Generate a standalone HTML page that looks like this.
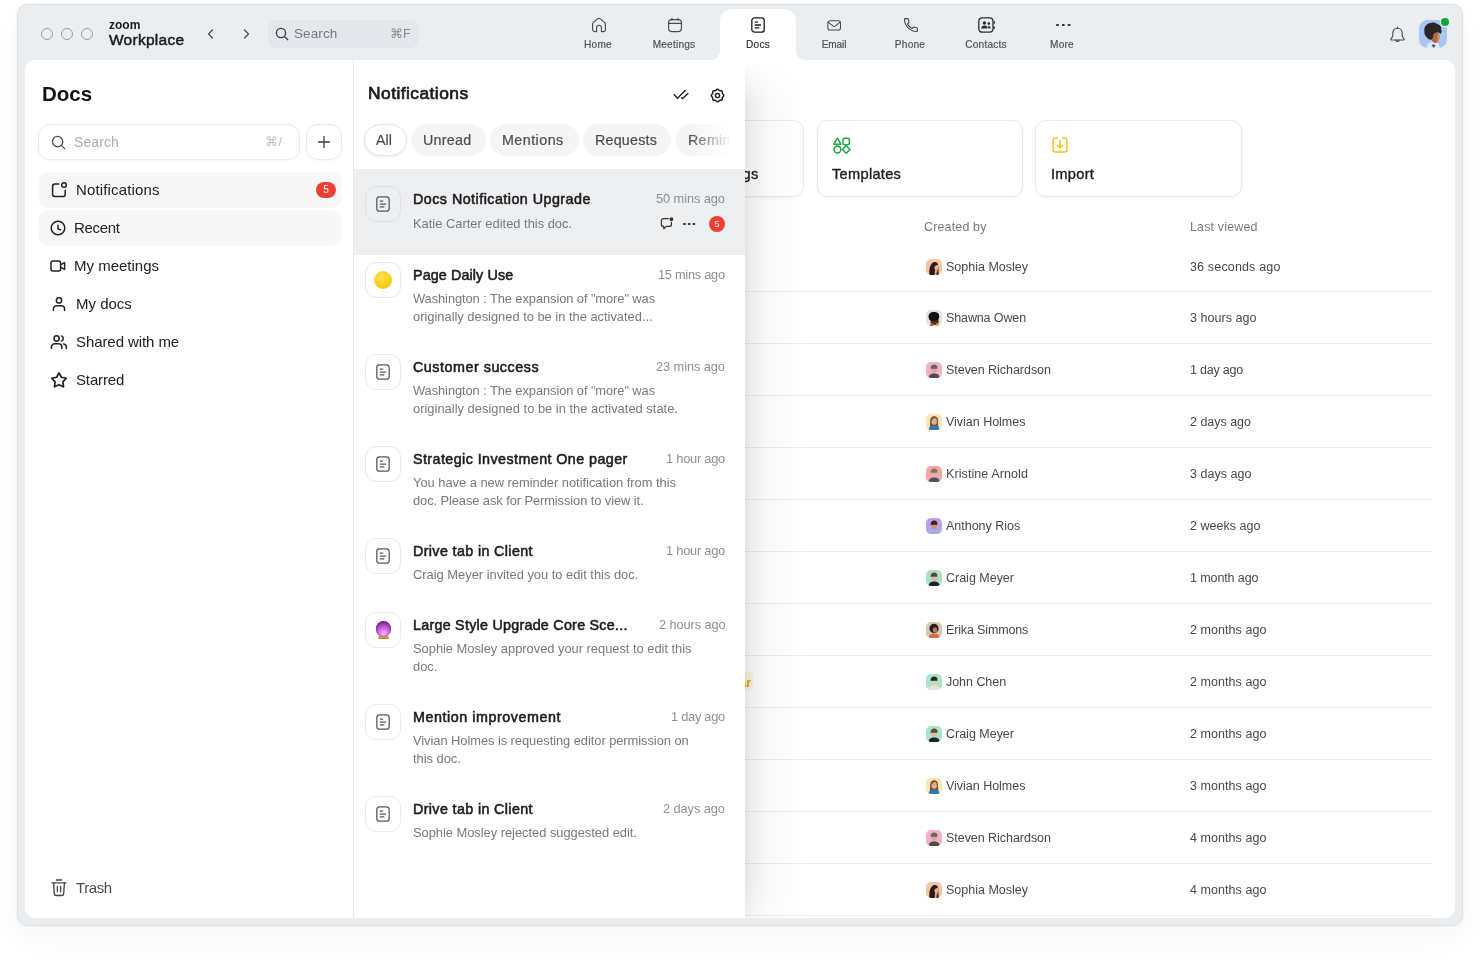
<!DOCTYPE html>
<html lang="en">
<head>
<meta charset="utf-8">
<title>Zoom Workplace - Docs</title>
<style>
*{box-sizing:border-box;margin:0;padding:0}
html,body{width:1480px;height:975px;overflow:hidden;background:#fff}
body{font-family:"Liberation Sans",sans-serif;color:#1f1f1f;position:relative;-webkit-font-smoothing:antialiased}
.abs{position:absolute}
.t{position:absolute;white-space:nowrap;line-height:1;will-change:transform}
svg{display:block;overflow:visible}
/* window */
#win{left:17px;top:4px;width:1446px;height:922px;border-radius:11px;background:#ebeef1;box-shadow:inset 0 0 0 1px rgba(0,0,0,.045),0 0 3px rgba(0,0,0,.06),0 14px 30px rgba(0,0,0,.035)}
#panel{left:25px;top:60px;width:1430px;height:858px;border-radius:10px;background:#fff;overflow:hidden}
.tl{width:12px;height:12px;border-radius:50%;border:1px solid #9a9da2;top:28px}
#tsearch{left:268px;top:20px;width:150px;height:28px;border-radius:8px;background:#e3e6ea}
.nav{font-size:10.1px;color:#4a4d52;-webkit-text-stroke:.15px #4a4d52;transform:translateX(-50%);top:40px;letter-spacing:.22px}
#doctab{left:720px;top:9px;width:76px;height:52px;background:#fff;border-radius:12px 12px 0 0}
#doctab:before,#doctab:after{content:"";position:absolute;bottom:1px;width:10px;height:10px;background:radial-gradient(circle at 0 0,transparent 10px,#fff 10.5px)}
#doctab:before{left:-10px}
#doctab:after{right:-10px;background:radial-gradient(circle at 100% 0,transparent 10px,#fff 10.5px)}
/* sidebar */
.sbi{left:13px;width:304px;height:36px;border-radius:10px}
.sbt{font-size:15px;color:#222;letter-spacing:.15px}

.ibox{left:340px;width:36px;height:36px;border-radius:11px;border:1px solid #e9eaec;background:#fff}
.chip{top:64px;height:32px;border-radius:16px;background:#f5f5f6}
.chipt{top:72.6px;font-size:14.3px;color:#4c4c4e;-webkit-text-stroke:.2px #4c4c4e}
.ntitle{font-size:14.3px;color:#1c1c1e;-webkit-text-stroke:.55px #1c1c1e}
.ntime{font-size:12.8px;color:#8e9094;letter-spacing:-.15px}
.nsub{font-size:12.9px;color:#77797d;letter-spacing:-.05px}

.card{top:60px;height:77px;border-radius:11px;border:1px solid #e9eaec;background:#fff;box-shadow:0 1px 3px rgba(0,0,0,.05)}
.cardt{top:106.7px;font-size:14.6px;color:#1c1c1e;-webkit-text-stroke:.35px #1c1c1e;letter-spacing:.3px}
.th{top:161px;font-size:12.4px;color:#77797d;letter-spacing:.2px}
.td{font-size:12.5px;color:#47484b;letter-spacing:.06px}
</style>
</head>
<body>
<div id="win" class="abs"></div>

<!-- title bar -->
<div class="abs tl" style="left:41px"></div>
<div class="abs tl" style="left:61px"></div>
<div class="abs tl" style="left:81px"></div>
<div class="t" style="left:108.5px;top:19px;font-size:12px;font-weight:bold;color:#1b1b1b;letter-spacing:0">zoom</div>
<div class="t" style="left:109px;top:32.3px;font-size:15.5px;color:#1b1b1b;-webkit-text-stroke:.5px #1b1b1b;letter-spacing:.26px">Workplace</div>
<svg class="abs" style="left:205px;top:28px" width="12" height="12" viewBox="0 0 12 12" fill="none" stroke="#484b50" stroke-width="1.2" stroke-linecap="round" stroke-linejoin="round"><path d="M7.5 2 L3.5 6 L7.5 10"/></svg>
<svg class="abs" style="left:240px;top:28px" width="12" height="12" viewBox="0 0 12 12" fill="none" stroke="#484b50" stroke-width="1.2" stroke-linecap="round" stroke-linejoin="round"><path d="M4.5 2 L8.5 6 L4.5 10"/></svg>
<div id="tsearch" class="abs"></div>
<svg class="abs" style="left:275px;top:27px" width="14" height="14" viewBox="0 0 14 14" fill="none" stroke="#3a3d42" stroke-width="1.3" stroke-linecap="round"><circle cx="6" cy="6" r="4.6"/><path d="M9.5 9.5 L12.8 12.8"/></svg>
<div class="t" style="left:294px;top:27px;font-size:13.5px;color:#75787d;letter-spacing:.1px">Search</div>
<div class="t" style="left:390px;top:28px;font-size:12.5px;color:#8a8d92">⌘F</div>

<!-- nav tabs -->
<div id="doctab" class="abs"></div>
<div class="t nav" style="left:598px">Home</div>
<div class="t nav" style="left:674px">Meetings</div>
<div class="t nav" style="left:758px;color:#1b1b1b">Docs</div>
<div class="t nav" style="left:834.3px;letter-spacing:-.1px">Email</div>
<div class="t nav" style="left:910px">Phone</div>
<div class="t nav" style="left:986px">Contacts</div>
<div class="t nav" style="left:1062px">More</div>

<!-- nav icons -->
<svg class="abs" style="left:591px;top:17px" width="16" height="16" viewBox="0 0 16 16" fill="none" stroke="#484b50" stroke-width="1.15" stroke-linecap="round" stroke-linejoin="round"><path d="M1.6 7.2 C1.6 6.4 1.9 5.9 2.5 5.4 L6.6 1.9 C7.4 1.2 8.6 1.2 9.4 1.9 L13.5 5.4 C14.1 5.9 14.4 6.4 14.4 7.2 V12.4 A2.2 2.2 0 0 1 12.2 14.6 H10.4 V10.6 A2.4 2.4 0 0 0 5.6 10.6 V14.6 H3.8 A2.2 2.2 0 0 1 1.6 12.4 Z"/></svg>
<svg class="abs" style="left:667px;top:17px" width="16" height="16" viewBox="0 0 16 16" fill="none" stroke="#484b50" stroke-width="1.15" stroke-linecap="round" stroke-linejoin="round"><rect x="1.6" y="2.6" width="12.8" height="12" rx="3"/><path d="M1.6 6.4 H14.4 M5 1.2 V3 M11 1.2 V3"/></svg>
<svg class="abs" style="left:751px;top:17px" width="14" height="16" viewBox="0 0 14 16" fill="none" stroke="#1b1b1b" stroke-width="1.3" stroke-linecap="round" stroke-linejoin="round"><rect x=".8" y=".8" width="12.4" height="14.4" rx="2.8"/><path d="M4.3 5.1 H6.7 M4.3 8 H9.6 M4.3 10.9 H7.9"/></svg>
<svg class="abs" style="left:827px;top:19.6px" width="14.4" height="10.8" viewBox="0 0 16 12" fill="none" stroke="#484b50" stroke-width="1.15" stroke-linecap="round" stroke-linejoin="round"><rect x="1" y=".8" width="14" height="10.4" rx="2.4"/><path d="M1.4 2.4 L6.6 6.6 C7.4 7.2 8.6 7.2 9.4 6.6 L14.6 2.4"/></svg>
<svg class="abs" style="left:903px;top:17px" width="16" height="16" viewBox="0 0 16 16" fill="none" stroke="#484b50" stroke-width="1.15" stroke-linecap="round" stroke-linejoin="round"><path d="M2.2 1.6 H4.3 C4.8 1.6 5.2 1.9 5.3 2.4 L5.9 5 C6 5.4 5.9 5.8 5.6 6 L4.5 7 C5.4 9 7 10.6 9 11.5 L10 10.4 C10.2 10.1 10.6 10 11 10.1 L13.6 10.7 C14.1 10.8 14.4 11.2 14.4 11.7 V13.8 C14.4 14.2 14.1 14.5 13.7 14.5 C6.9 14.3 1.7 9.1 1.5 2.3 C1.5 1.9 1.8 1.6 2.2 1.6 Z"/></svg>
<svg class="abs" style="left:978px;top:17px" width="17" height="16" viewBox="0 0 17 16" fill="none" stroke="#2a2c30" stroke-width="1.3" stroke-linecap="round" stroke-linejoin="round"><rect x=".8" y=".8" width="14.2" height="14.4" rx="3.4"/><path d="M16.2 4.6 V6.2 M16.2 9.8 V11.4"/><g fill="#2a2c30" stroke="none"><circle cx="6.4" cy="6" r="1.7"/><path d="M3.2 11.4 C3.2 9.6 4.6 8.6 6.4 8.6 C8.2 8.6 9.6 9.6 9.6 11.4 Z"/><circle cx="10.8" cy="6.6" r="1.3"/><path d="M10.4 11.4 C10.4 10.4 10.2 9.6 9.6 9 C11.4 8.6 12.8 9.6 12.8 11.4 Z"/></g></svg>
<div class="abs" style="left:1056px;top:23.6px;width:2.6px;height:2.6px;border-radius:50%;background:#2a2c30;box-shadow:5.8px 0 0 #2a2c30,11.6px 0 0 #2a2c30"></div>
<svg class="abs" style="left:1389px;top:25.7px" width="17" height="18" viewBox="0 0 17 18" fill="none" stroke="#484b50" stroke-width="1.15" stroke-linecap="round" stroke-linejoin="round"><path d="M8.5 2.2 C5.6 2.2 3.8 4.4 3.8 7 V9.6 C3.8 10.8 3 11.6 2 12.8 C1.6 13.4 2 14 2.6 14 H14.4 C15 14 15.4 13.4 15 12.8 C14 11.6 13.2 10.8 13.2 9.6 V7 C13.2 4.4 11.4 2.2 8.5 2.2 Z"/><path d="M8.5 1 V2.2 M6.8 14.2 A1.8 1.8 0 0 0 10.2 14.2"/></svg>
<svg class="abs" style="left:1419px;top:20px" width="28" height="28" viewBox="0 0 28 28"><defs><clipPath id="uav"><rect width="28" height="28" rx="8.5"/></clipPath></defs><g clip-path="url(#uav)"><rect width="28" height="28" fill="#a9c7f3"/><path d="M7.5 28 C7.8 23.6 10.4 22 13.6 21.2 L18.6 22.4 C20 24 20.6 26 20.8 28 Z" fill="#e3e8f1"/><path d="M12.6 25 L14.6 28 L16.6 25.6 L14.8 24.2 Z" fill="#2a55a2"/><path d="M13 13 C14 11.6 18.6 11 19.8 13.4 C20.8 15.4 21 17.6 20.2 19.6 C19.6 21.6 18.4 23 16.6 23 C14.6 23 13 21.4 12.6 19.4 Z" fill="#b06a44"/><path d="M18.4 13.4 C19.8 14 20.6 16 20.4 18 C20.2 20 19.2 21.8 17.8 22.4 C18.6 20.4 18.8 16.4 18.4 13.4 Z" fill="#d9946a"/><path d="M5.4 11.6 C4.6 7.4 7.2 3.6 11.4 3 C13.4 2 16.6 2.4 18.2 4 C20.8 4.4 22.6 6.8 22.2 9.4 C23 11 22.6 13 21.4 14 C20.6 12.6 19 12 17.2 12.4 C15.2 12.8 14.2 14.2 14 16 C13.8 17.8 13.6 19 12.4 19.8 C10.4 20 8.4 18.8 7.6 17 C6 16 5.2 13.8 5.4 11.6 Z" fill="#2b2523"/></g></svg>
<div class="abs" style="left:1441px;top:18px;width:8px;height:8px;border-radius:50%;background:#12a53a;box-shadow:0 0 0 1.2px #e6f3ea"></div>
<!-- NAVICONS -->

<!-- main panel -->
<div id="panel" class="abs">

<!-- content -->
<div class="abs card" style="left:573px;width:206px"></div>
<div class="t cardt" style="left:672px">Meetings</div>
<div class="abs card" style="left:792px;width:206px"></div>
<div class="abs card" style="left:1010px;width:207px"></div>
<svg class="abs" style="left:807.5px;top:76.5px" width="17.5" height="17" viewBox="0 0 17 16" fill="none" stroke="#1fa64a" stroke-width="1.5" stroke-linejoin="round"><path d="M4.3 .9 L7.7 6.7 H.9 Z"/><rect x="9.7" y="1" width="6.2" height="6.2" rx="1.5"/><circle cx="4.3" cy="11.9" r="3.3"/><path d="M12.8 8.2 L16.5 11.9 L12.8 15.6 L9.1 11.9 Z"/></svg>
<div class="t cardt" style="left:807px">Templates</div>
<svg class="abs" style="left:1027px;top:77px" width="16" height="16" viewBox="0 0 16 16" fill="none" stroke="#f2bd18" stroke-width="1.4" stroke-linecap="round" stroke-linejoin="round"><path d="M5.4 1 H3.4 A2.4 2.4 0 0 0 1 3.4 V12.6 A2.4 2.4 0 0 0 3.4 15 H12.6 A2.4 2.4 0 0 0 15 12.6 V3.4 A2.4 2.4 0 0 0 12.6 1 H10.6"/><path d="M8 3.6 V10.6 M5.4 8.2 L8 10.8 L10.6 8.2"/></svg>
<div class="t cardt" style="left:1026px">Import</div>
<div class="t th" style="left:899px">Created by</div>
<div class="t th" style="left:1165px">Last viewed</div>
<svg class="abs" style="left:901px;top:199px" width="16" height="16" viewBox="0 0 16 16"><defs><clipPath id="c901_199"><rect width="16" height="16" rx="5"/></clipPath></defs><g clip-path="url(#c901_199)"><rect width="16" height="16" fill="#f6c3a3"/><path d="M3.4 16 C3 10 4 4.4 8 3 C10.6 2.4 12.2 4.2 12.2 6.4 L12.6 13 L11.6 16 Z" fill="#2b1c19"/><ellipse cx="10.4" cy="8.2" rx="2" ry="2.9" fill="#e6b497"/><path d="M8.2 5.2 C9.4 4.4 11.4 4.6 12.2 6.2 C10.8 5.8 9.4 6.4 8.6 8.4 Z" fill="#2b1c19"/><path d="M9 11 L11.4 11 L12 16 H8.6 Z" fill="#e0aa8c"/><path d="M10.8 12.4 C12.2 12.6 12.8 14 12.8 16 H10.4 Z" fill="#3a2622"/></g></svg>
<div class="t td" style="left:921px;top:201.2px;letter-spacing:0px">Sophia Mosley</div>
<div class="t td" style="left:1165px;top:201.2px;letter-spacing:0.16px">36 seconds ago</div>
<svg class="abs" style="left:901px;top:250px" width="16" height="16" viewBox="0 0 16 16"><defs><clipPath id="c901_250"><rect width="16" height="16" rx="5"/></clipPath></defs><g clip-path="url(#c901_250)"><rect width="16" height="16" fill="#e9e1de"/><ellipse cx="8.6" cy="11.6" rx="4.2" ry="3.4" fill="#5a3220"/><path d="M4 15.4 C4 13.8 5 13.2 6.4 13.4 L7 16 H4 Z" fill="#cf5a2c"/><path d="M10.6 13.4 C12.4 13 13.2 14 13.4 16 H10 Z" fill="#eaa468"/><path d="M2.6 7.4 C2.2 4 4.6 1.8 7.8 2 C11 1.8 13.4 3.6 13.2 6.4 C13.4 8.6 12.2 10 10.6 10.6 C9 11.4 6.6 11.6 5 10.8 C3.4 10 2.8 8.8 2.6 7.4 Z" fill="#14110f"/></g></svg>
<div class="t td" style="left:921px;top:252.2px;letter-spacing:-0.12px">Shawna Owen</div>
<div class="t td" style="left:1165px;top:252.2px;letter-spacing:0.04px">3 hours ago</div>
<svg class="abs" style="left:901px;top:302px" width="16" height="16" viewBox="0 0 16 16"><defs><clipPath id="c901_302"><rect width="16" height="16" rx="5"/></clipPath></defs><g clip-path="url(#c901_302)"><rect width="16" height="16" fill="#f4b0c6"/><path d="M2.6 16 C2.8 12.6 5.4 11.6 8.2 11.6 C11 11.6 13.4 12.6 13.6 16 Z" fill="#4a4a50"/><ellipse cx="8.2" cy="7.4" rx="2.7" ry="3.3" fill="#d8a890"/><path d="M4.6 6.8 C4.4 3.6 6.2 2.4 8.2 2.4 C10.4 2.4 11.8 3.8 11.4 6.8 Z" fill="#6a6460"/></g></svg>
<div class="t td" style="left:921px;top:304.2px;letter-spacing:-0.04px">Steven Richardson</div>
<div class="t td" style="left:1165px;top:304.2px;letter-spacing:-0.22px">1 day ago</div>
<svg class="abs" style="left:901px;top:354px" width="16" height="16" viewBox="0 0 16 16"><defs><clipPath id="c901_354"><rect width="16" height="16" rx="5"/></clipPath></defs><g clip-path="url(#c901_354)"><rect width="16" height="16" fill="#fbe6b4"/><path d="M4.2 8.5 C3.6 4 6 2.2 8.3 2.2 C11 2.2 12.6 4.4 12 8.2 L12.4 13 L3.8 13 Z" fill="#7a5232"/><path d="M2.6 16 C2.8 12.6 5.4 11.6 8.2 11.6 C11 11.6 13.4 12.6 13.6 16 Z" fill="#2f78b8"/><ellipse cx="8.2" cy="7.4" rx="2.7" ry="3.3" fill="#e0b090"/><path d="M5.3 7 C5.4 4.4 7 3.4 8.6 3.6 C7.6 4.6 6.6 5.6 5.3 7 Z" fill="#7a5232"/></g></svg>
<div class="t td" style="left:921px;top:356.2px;letter-spacing:-0.02px">Vivian Holmes</div>
<div class="t td" style="left:1165px;top:356.2px;letter-spacing:-0.02px">2 days ago</div>
<svg class="abs" style="left:901px;top:406px" width="16" height="16" viewBox="0 0 16 16"><defs><clipPath id="c901_406"><rect width="16" height="16" rx="5"/></clipPath></defs><g clip-path="url(#c901_406)"><rect width="16" height="16" fill="#f6a7a2"/><path d="M2.6 16 C2.8 12.6 5.4 11.6 8.2 11.6 C11 11.6 13.4 12.6 13.6 16 Z" fill="#44546a"/><ellipse cx="8.2" cy="7.4" rx="2.7" ry="3.3" fill="#e0b49c"/><path d="M4.6 6.8 C4.4 3.6 6.2 2.4 8.2 2.4 C10.4 2.4 11.8 3.8 11.4 6.8 Z" fill="#8a7468"/></g></svg>
<div class="t td" style="left:921px;top:408.2px;letter-spacing:0.09px">Kristine Arnold</div>
<div class="t td" style="left:1165px;top:408.2px;letter-spacing:0.03px">3 days ago</div>
<svg class="abs" style="left:901px;top:458px" width="16" height="16" viewBox="0 0 16 16"><defs><clipPath id="c901_458"><rect width="16" height="16" rx="5"/></clipPath></defs><g clip-path="url(#c901_458)"><rect width="16" height="16" fill="#b9a0ee"/><path d="M2.6 16 C2.8 12.6 5.4 11.6 8.2 11.6 C11 11.6 13.4 12.6 13.6 16 Z" fill="#9ab4d8"/><ellipse cx="8.2" cy="7.4" rx="2.7" ry="3.3" fill="#c89070"/><path d="M4.6 6.8 C4.4 3.6 6.2 2.4 8.2 2.4 C10.4 2.4 11.8 3.8 11.4 6.8 Z" fill="#3a2418"/></g></svg>
<div class="t td" style="left:921px;top:460.2px;letter-spacing:-0.02px">Anthony Rios</div>
<div class="t td" style="left:1165px;top:460.2px;letter-spacing:0.02px">2 weeks ago</div>
<svg class="abs" style="left:901px;top:510px" width="16" height="16" viewBox="0 0 16 16"><defs><clipPath id="c901_510"><rect width="16" height="16" rx="5"/></clipPath></defs><g clip-path="url(#c901_510)"><rect width="16" height="16" fill="#a9e2c4"/><path d="M2.6 16 C2.8 12.6 5.4 11.6 8.2 11.6 C11 11.6 13.4 12.6 13.6 16 Z" fill="#1e2228"/><ellipse cx="8.2" cy="7.4" rx="2.7" ry="3.3" fill="#e0b8a0"/><path d="M4.6 6.8 C4.4 3.6 6.2 2.4 8.2 2.4 C10.4 2.4 11.8 3.8 11.4 6.8 Z" fill="#5a4a3c"/></g></svg>
<div class="t td" style="left:921px;top:512.2px;letter-spacing:-0.01px">Craig Meyer</div>
<div class="t td" style="left:1165px;top:512.2px;letter-spacing:-0.1px">1 month ago</div>
<svg class="abs" style="left:901px;top:562px" width="16" height="16" viewBox="0 0 16 16"><defs><clipPath id="c901_562"><rect width="16" height="16" rx="5"/></clipPath></defs><g clip-path="url(#c901_562)"><rect width="16" height="16" fill="#d8c6b6"/><path d="M2.6 16 C2.8 12.6 5.4 11.6 8.2 11.6 C11 11.6 13.4 12.6 13.6 16 Z" fill="#d8694a"/><circle cx="8" cy="6.4" r="4.6" fill="#2a1c18"/><ellipse cx="9" cy="8" rx="2.2" ry="2.8" fill="#b87858"/></g></svg>
<div class="t td" style="left:921px;top:564.2px;letter-spacing:-0.14px">Erika Simmons</div>
<div class="t td" style="left:1165px;top:564.2px;letter-spacing:0.06px">2 months ago</div>
<svg class="abs" style="left:901px;top:614px" width="16" height="16" viewBox="0 0 16 16"><defs><clipPath id="c901_614"><rect width="16" height="16" rx="5"/></clipPath></defs><g clip-path="url(#c901_614)"><rect width="16" height="16" fill="#a8e6c8"/><path d="M2.6 16 C2.8 12.6 5.4 11.6 8.2 11.6 C11 11.6 13.4 12.6 13.6 16 Z" fill="#e8e4e0"/><ellipse cx="8.2" cy="7.4" rx="2.7" ry="3.3" fill="#ecc8b0"/><path d="M4.6 6.8 C4.4 3.6 6.2 2.4 8.2 2.4 C10.4 2.4 11.8 3.8 11.4 6.8 Z" fill="#2a2422"/></g></svg>
<div class="t td" style="left:921px;top:616.2px;letter-spacing:-0.04px">John Chen</div>
<div class="t td" style="left:1165px;top:616.2px;letter-spacing:0.06px">2 months ago</div>
<svg class="abs" style="left:901px;top:666px" width="16" height="16" viewBox="0 0 16 16"><defs><clipPath id="c901_666"><rect width="16" height="16" rx="5"/></clipPath></defs><g clip-path="url(#c901_666)"><rect width="16" height="16" fill="#a9e2c4"/><path d="M2.6 16 C2.8 12.6 5.4 11.6 8.2 11.6 C11 11.6 13.4 12.6 13.6 16 Z" fill="#1e2228"/><ellipse cx="8.2" cy="7.4" rx="2.7" ry="3.3" fill="#e0b8a0"/><path d="M4.6 6.8 C4.4 3.6 6.2 2.4 8.2 2.4 C10.4 2.4 11.8 3.8 11.4 6.8 Z" fill="#5a4a3c"/></g></svg>
<div class="t td" style="left:921px;top:668.2px;letter-spacing:-0.01px">Craig Meyer</div>
<div class="t td" style="left:1165px;top:668.2px;letter-spacing:0.06px">2 months ago</div>
<svg class="abs" style="left:901px;top:718px" width="16" height="16" viewBox="0 0 16 16"><defs><clipPath id="c901_718"><rect width="16" height="16" rx="5"/></clipPath></defs><g clip-path="url(#c901_718)"><rect width="16" height="16" fill="#fbe6b4"/><path d="M4.2 8.5 C3.6 4 6 2.2 8.3 2.2 C11 2.2 12.6 4.4 12 8.2 L12.4 13 L3.8 13 Z" fill="#7a5232"/><path d="M2.6 16 C2.8 12.6 5.4 11.6 8.2 11.6 C11 11.6 13.4 12.6 13.6 16 Z" fill="#2f78b8"/><ellipse cx="8.2" cy="7.4" rx="2.7" ry="3.3" fill="#e0b090"/><path d="M5.3 7 C5.4 4.4 7 3.4 8.6 3.6 C7.6 4.6 6.6 5.6 5.3 7 Z" fill="#7a5232"/></g></svg>
<div class="t td" style="left:921px;top:720.2px;letter-spacing:-0.02px">Vivian Holmes</div>
<div class="t td" style="left:1165px;top:720.2px;letter-spacing:0.06px">3 months ago</div>
<svg class="abs" style="left:901px;top:770px" width="16" height="16" viewBox="0 0 16 16"><defs><clipPath id="c901_770"><rect width="16" height="16" rx="5"/></clipPath></defs><g clip-path="url(#c901_770)"><rect width="16" height="16" fill="#f4b0c6"/><path d="M2.6 16 C2.8 12.6 5.4 11.6 8.2 11.6 C11 11.6 13.4 12.6 13.6 16 Z" fill="#4a4a50"/><ellipse cx="8.2" cy="7.4" rx="2.7" ry="3.3" fill="#d8a890"/><path d="M4.6 6.8 C4.4 3.6 6.2 2.4 8.2 2.4 C10.4 2.4 11.8 3.8 11.4 6.8 Z" fill="#6a6460"/></g></svg>
<div class="t td" style="left:921px;top:772.2px;letter-spacing:-0.04px">Steven Richardson</div>
<div class="t td" style="left:1165px;top:772.2px;letter-spacing:0.06px">4 months ago</div>
<svg class="abs" style="left:901px;top:822px" width="16" height="16" viewBox="0 0 16 16"><defs><clipPath id="c901_822"><rect width="16" height="16" rx="5"/></clipPath></defs><g clip-path="url(#c901_822)"><rect width="16" height="16" fill="#f6c3a3"/><path d="M3.4 16 C3 10 4 4.4 8 3 C10.6 2.4 12.2 4.2 12.2 6.4 L12.6 13 L11.6 16 Z" fill="#2b1c19"/><ellipse cx="10.4" cy="8.2" rx="2" ry="2.9" fill="#e6b497"/><path d="M8.2 5.2 C9.4 4.4 11.4 4.6 12.2 6.2 C10.8 5.8 9.4 6.4 8.6 8.4 Z" fill="#2b1c19"/><path d="M9 11 L11.4 11 L12 16 H8.6 Z" fill="#e0aa8c"/><path d="M10.8 12.4 C12.2 12.6 12.8 14 12.8 16 H10.4 Z" fill="#3a2622"/></g></svg>
<div class="t td" style="left:921px;top:824.2px;letter-spacing:0px">Sophia Mosley</div>
<div class="t td" style="left:1165px;top:824.2px;letter-spacing:0.06px">4 months ago</div>
<div class="abs" style="left:560px;top:231px;width:847px;height:1px;background:#ededef"></div>
<div class="abs" style="left:560px;top:283px;width:847px;height:1px;background:#ededef"></div>
<div class="abs" style="left:560px;top:335px;width:847px;height:1px;background:#ededef"></div>
<div class="abs" style="left:560px;top:387px;width:847px;height:1px;background:#ededef"></div>
<div class="abs" style="left:560px;top:439px;width:847px;height:1px;background:#ededef"></div>
<div class="abs" style="left:560px;top:491px;width:847px;height:1px;background:#ededef"></div>
<div class="abs" style="left:560px;top:543px;width:847px;height:1px;background:#ededef"></div>
<div class="abs" style="left:560px;top:595px;width:847px;height:1px;background:#ededef"></div>
<div class="abs" style="left:560px;top:647px;width:847px;height:1px;background:#ededef"></div>
<div class="abs" style="left:560px;top:699px;width:847px;height:1px;background:#ededef"></div>
<div class="abs" style="left:560px;top:751px;width:847px;height:1px;background:#ededef"></div>
<div class="abs" style="left:560px;top:803px;width:847px;height:1px;background:#ededef"></div>
<div class="abs" style="left:560px;top:855px;width:847px;height:1px;background:#ededef"></div>
<div class="abs" style="left:672px;top:612px;width:55.5px;height:19.4px;border-radius:5px;background:#fcf7e4"></div>
<div class="t" style="left:680.2px;top:617px;font-size:12.4px;font-weight:bold;color:#e6a700">Popular</div>
<!-- CONTENT -->

<!-- notification panel -->
<div class="abs" style="left:720px;top:0;width:60px;height:858px;background:linear-gradient(90deg,rgba(0,0,0,.1) 0,rgba(0,0,0,.06) 14%,rgba(0,0,0,.025) 42%,rgba(0,0,0,.008) 75%,rgba(0,0,0,0) 100%);-webkit-mask-image:linear-gradient(180deg,transparent 0,#000 46px,#000 820px,rgba(0,0,0,.5) 858px);mask-image:linear-gradient(180deg,transparent 0,#000 46px,#000 820px,rgba(0,0,0,.5) 858px)"></div>
<div class="abs" style="left:329px;top:0;width:391px;height:858px;background:#fff"></div>
<div class="t" style="left:343px;top:25px;font-size:17.4px;color:#1a1a1a;-webkit-text-stroke:.7px #1a1a1a;letter-spacing:.45px">Notifications</div>
<svg class="abs" style="left:648px;top:29px" width="16" height="12" viewBox="0 0 16 12" fill="none" stroke="#222" stroke-width="1.45" stroke-linecap="round" stroke-linejoin="round"><path d="M1.2 5.7 L4.5 9.2 L12.1 1.6"/><path d="M8.6 8.7 L9.6 9.5 L14.9 4.5"/></svg>
<svg class="abs" style="left:683.6px;top:26.5px" width="17" height="17" viewBox="0 0 17 17" fill="none" stroke="#222" stroke-width="1.45" stroke-linecap="round" stroke-linejoin="round"><path d="M8.50 2.20 L8.91 2.28 L9.29 2.50 L9.63 2.81 L9.94 3.14 L10.23 3.42 L10.53 3.60 L10.87 3.69 L11.27 3.69 L11.72 3.68 L12.18 3.70 L12.61 3.81 L12.95 4.05 L13.19 4.39 L13.30 4.82 L13.32 5.28 L13.31 5.72 L13.31 6.13 L13.40 6.47 L13.58 6.77 L13.86 7.06 L14.19 7.37 L14.50 7.71 L14.72 8.09 L14.80 8.50 L14.72 8.91 L14.50 9.29 L14.19 9.63 L13.86 9.94 L13.58 10.23 L13.40 10.53 L13.31 10.87 L13.31 11.27 L13.32 11.72 L13.30 12.18 L13.19 12.61 L12.95 12.95 L12.61 13.19 L12.18 13.30 L11.72 13.32 L11.27 13.31 L10.87 13.31 L10.53 13.40 L10.23 13.58 L9.94 13.86 L9.63 14.19 L9.29 14.50 L8.91 14.72 L8.50 14.80 L8.09 14.72 L7.71 14.50 L7.37 14.19 L7.06 13.86 L6.77 13.58 L6.47 13.40 L6.13 13.31 L5.73 13.31 L5.28 13.32 L4.82 13.30 L4.39 13.19 L4.05 12.95 L3.81 12.61 L3.70 12.18 L3.68 11.72 L3.69 11.28 L3.69 10.87 L3.60 10.53 L3.42 10.23 L3.14 9.94 L2.81 9.63 L2.50 9.29 L2.28 8.91 L2.20 8.50 L2.28 8.09 L2.50 7.71 L2.81 7.37 L3.14 7.06 L3.42 6.77 L3.60 6.47 L3.69 6.13 L3.69 5.72 L3.68 5.28 L3.70 4.82 L3.81 4.39 L4.05 4.05 L4.39 3.81 L4.82 3.70 L5.28 3.68 L5.72 3.69 L6.13 3.69 L6.47 3.60 L6.77 3.42 L7.06 3.14 L7.37 2.81 L7.71 2.50 L8.09 2.28 Z"/><circle cx="8.5" cy="8.5" r="2.1"/></svg>
<div class="abs" style="left:0;top:0;width:720px;height:110px;overflow:hidden">
<div class="abs chip" style="left:339px;width:43px;background:#fff;border:1px solid #e3e4e6;box-shadow:0 1px 3px rgba(0,0,0,.08)"></div>
<div class="abs chip" style="left:386px;width:75px"></div>
<div class="abs chip" style="left:465px;width:89px"></div>
<div class="abs chip" style="left:558px;width:88px"></div>
<div class="abs chip" style="left:651px;width:90px"></div>
<div class="t chipt" style="left:351px;letter-spacing:0.07px">All</div>
<div class="t chipt" style="left:398px;letter-spacing:0.25px">Unread</div>
<div class="t chipt" style="left:477px;letter-spacing:0.46px">Mentions</div>
<div class="t chipt" style="left:570px;letter-spacing:0.2px">Requests</div>
<div class="t chipt" style="left:663px;letter-spacing:0.3px">Reminders</div>
<div class="abs" style="left:664px;top:60px;width:56px;height:40px;background:linear-gradient(90deg,rgba(255,255,255,0),#fff 76%)"></div>
</div>
<div class="abs" style="left:329px;top:109px;width:391px;height:86px;background:#eeeff1"></div>
<div class="abs ibox" style="top:126px;background:transparent;border-color:#dfe0e3"></div>
<svg class="abs" style="left:351px;top:136px" width="14" height="16" viewBox="0 0 14 16" fill="none" stroke="#55575b" stroke-width="1.25" stroke-linecap="round" stroke-linejoin="round"><rect x=".8" y=".8" width="12.4" height="14.4" rx="2.8"/><path d="M4.3 5.1 H6.7 M4.3 8 H9.6 M4.3 10.9 H7.9"/></svg>
<div class="t ntitle" style="left:388px;top:132.2px;letter-spacing:0.47px">Docs Notification Upgrade</div>
<div class="t ntime" style="right:730px;top:132.8px;letter-spacing:-0.08px">50 mins ago</div>
<div class="t nsub" style="left:388px;top:158px;letter-spacing:0px">Katie Carter edited this doc.</div>
<div class="abs ibox" style="top:202px"></div>
<div class="abs" style="left:349px;top:211px;width:18px;height:18px;border-radius:50%;background:radial-gradient(circle at 40% 35%,#ffe34d,#f5c910 70%,#e8b800)"></div>
<div class="t ntitle" style="left:388px;top:208.2px;letter-spacing:0.12px">Page Daily Use</div>
<div class="t ntime" style="right:730px;top:208.8px;letter-spacing:-0.27px">15 mins ago</div>
<div class="t nsub" style="left:388px;top:232.5px;letter-spacing:-0.09px">Washington : The expansion of &quot;more&quot; was</div>
<div class="t nsub" style="left:388px;top:250.5px;letter-spacing:-0.01px">originally designed to be in the activated...</div>
<div class="abs ibox" style="top:294px"></div>
<svg class="abs" style="left:351px;top:304px" width="14" height="16" viewBox="0 0 14 16" fill="none" stroke="#55575b" stroke-width="1.25" stroke-linecap="round" stroke-linejoin="round"><rect x=".8" y=".8" width="12.4" height="14.4" rx="2.8"/><path d="M4.3 5.1 H6.7 M4.3 8 H9.6 M4.3 10.9 H7.9"/></svg>
<div class="t ntitle" style="left:388px;top:300.2px;letter-spacing:0.53px">Customer success</div>
<div class="t ntime" style="right:730px;top:300.8px;letter-spacing:-0.08px">23 mins ago</div>
<div class="t nsub" style="left:388px;top:324.5px;letter-spacing:-0.09px">Washington : The expansion of &quot;more&quot; was</div>
<div class="t nsub" style="left:388px;top:342.5px;letter-spacing:0.01px">originally designed to be in the activated state.</div>
<div class="abs ibox" style="top:386px"></div>
<svg class="abs" style="left:351px;top:396px" width="14" height="16" viewBox="0 0 14 16" fill="none" stroke="#55575b" stroke-width="1.25" stroke-linecap="round" stroke-linejoin="round"><rect x=".8" y=".8" width="12.4" height="14.4" rx="2.8"/><path d="M4.3 5.1 H6.7 M4.3 8 H9.6 M4.3 10.9 H7.9"/></svg>
<div class="t ntitle" style="left:388px;top:392.2px;letter-spacing:0.43px">Strategic Investment One pager</div>
<div class="t ntime" style="right:730px;top:392.8px;letter-spacing:-0.22px">1 hour ago</div>
<div class="t nsub" style="left:388px;top:416.5px;letter-spacing:-0.02px">You have a new reminder notification from this</div>
<div class="t nsub" style="left:388px;top:434.5px;letter-spacing:-0.09px">doc. Please ask for Permission to view it.</div>
<div class="abs ibox" style="top:478px"></div>
<svg class="abs" style="left:351px;top:488px" width="14" height="16" viewBox="0 0 14 16" fill="none" stroke="#55575b" stroke-width="1.25" stroke-linecap="round" stroke-linejoin="round"><rect x=".8" y=".8" width="12.4" height="14.4" rx="2.8"/><path d="M4.3 5.1 H6.7 M4.3 8 H9.6 M4.3 10.9 H7.9"/></svg>
<div class="t ntitle" style="left:388px;top:484.2px;letter-spacing:0.37px">Drive tab in Client</div>
<div class="t ntime" style="right:730px;top:484.8px;letter-spacing:-0.22px">1 hour ago</div>
<div class="t nsub" style="left:388px;top:508.5px;letter-spacing:-0.01px">Craig Meyer invited you to edit this doc.</div>
<div class="abs ibox" style="top:552px"></div>
<div class="abs" style="left:352.8px;top:575.6px;width:11px;height:3.6px;border-radius:1.5px;background:linear-gradient(180deg,#e8b84a,#b8801c)"></div>
<div class="abs" style="left:350.7px;top:561.2px;width:15.4px;height:15.4px;border-radius:50%;background:radial-gradient(circle at 52% 80%,#f4bcfb 0%,#cf66e0 38%,#8a2fa6 72%,#5a1a72 100%);box-shadow:inset 0 0 1.5px .5px rgba(70,15,90,.55)"></div>
<div class="t ntitle" style="left:388px;top:558.2px;letter-spacing:0.26px">Large Style Upgrade Core Sce...</div>
<div class="t ntime" style="right:730px;top:558.8px;letter-spacing:-0.1px">2 hours ago</div>
<div class="t nsub" style="left:388px;top:582.5px;letter-spacing:-0.02px">Sophie Mosley approved your request to edit this</div>
<div class="t nsub" style="left:388px;top:600.5px;letter-spacing:-0.02px">doc.</div>
<div class="abs ibox" style="top:644px"></div>
<svg class="abs" style="left:351px;top:654px" width="14" height="16" viewBox="0 0 14 16" fill="none" stroke="#55575b" stroke-width="1.25" stroke-linecap="round" stroke-linejoin="round"><rect x=".8" y=".8" width="12.4" height="14.4" rx="2.8"/><path d="M4.3 5.1 H6.7 M4.3 8 H9.6 M4.3 10.9 H7.9"/></svg>
<div class="t ntitle" style="left:388px;top:650.2px;letter-spacing:0.55px">Mention improvement</div>
<div class="t ntime" style="right:730px;top:650.8px;letter-spacing:-0.25px">1 day ago</div>
<div class="t nsub" style="left:388px;top:674.5px;letter-spacing:-0.06px">Vivian Holmes is requesting editor permission on</div>
<div class="t nsub" style="left:388px;top:692.5px;letter-spacing:-0.03px">this doc.</div>
<div class="abs ibox" style="top:736px"></div>
<svg class="abs" style="left:351px;top:746px" width="14" height="16" viewBox="0 0 14 16" fill="none" stroke="#55575b" stroke-width="1.25" stroke-linecap="round" stroke-linejoin="round"><rect x=".8" y=".8" width="12.4" height="14.4" rx="2.8"/><path d="M4.3 5.1 H6.7 M4.3 8 H9.6 M4.3 10.9 H7.9"/></svg>
<div class="t ntitle" style="left:388px;top:742.2px;letter-spacing:0.37px">Drive tab in Client</div>
<div class="t ntime" style="right:730px;top:742.8px;letter-spacing:-0.08px">2 days ago</div>
<div class="t nsub" style="left:388px;top:766.5px;letter-spacing:-0.03px">Sophie Mosley rejected suggested edit.</div>
<svg class="abs" style="left:635px;top:157px" width="14" height="13" viewBox="0 0 14 13" fill="none" stroke="#333" stroke-width="1.2" stroke-linecap="round" stroke-linejoin="round"><path d="M8.4 1.6 H3.4 A2 2 0 0 0 1.4 3.6 V7.4 A2 2 0 0 0 3.4 9.4 H3.8 V11.8 L6.6 9.4 H9.4 A2 2 0 0 0 11.4 7.4 V5.2"/><circle cx="11.4" cy="2.2" r="1.3" fill="#333"/></svg>
<div class="abs" style="left:658px;top:162.7px;width:2.7px;height:2.7px;border-radius:50%;background:#333;box-shadow:4.7px 0 0 #333,9.4px 0 0 #333"></div>
<div class="abs" style="left:684px;top:156px;width:16px;height:16px;border-radius:50%;background:#ec4035"></div>
<div class="t" style="left:684px;top:158.9px;width:16px;text-align:center;font-size:9.5px;color:#fff">5</div>
<!-- NOTIF -->

<!-- sidebar -->
<div class="abs" style="left:0;top:0;width:328px;height:858px;background:#fff"></div>
<div class="abs" style="left:328px;top:0;width:1px;height:858px;background:#e9e9eb"></div>
<div class="t" style="left:17px;top:24px;font-size:20.5px;font-weight:bold;color:#111">Docs</div>
<div class="abs" style="left:13px;top:64px;width:262px;height:36px;border:1px solid #e9eaec;border-radius:12px;box-shadow:0 1px 2px rgba(0,0,0,.03)"></div>
<svg class="abs" style="left:26px;top:75px" width="15" height="15" viewBox="0 0 15 15" fill="none" stroke="#4a4d52" stroke-width="1.3" stroke-linecap="round"><circle cx="6.6" cy="6.6" r="5.2"/><path d="M10.6 10.6 L13.6 13.6"/></svg>
<div class="t" style="left:49px;top:75.3px;font-size:14px;color:#a9abb0;letter-spacing:.1px">Search</div>
<div class="t" style="left:240px;top:76px;font-size:12.5px;color:#b9bbbf;letter-spacing:.5px">⌘/</div>
<div class="abs" style="left:281px;top:64px;width:36px;height:36px;border:1px solid #e9eaec;border-radius:12px;box-shadow:0 1px 2px rgba(0,0,0,.03)"></div>
<svg class="abs" style="left:293px;top:76px" width="12" height="12" viewBox="0 0 12 12" fill="none" stroke="#3a3d42" stroke-width="1.3" stroke-linecap="round"><path d="M6 .5 V11.5 M.5 6 H11.5"/></svg>

<div class="abs sbi" style="top:112px;background:#f7f7f8"></div>
<div class="abs sbi" style="top:150px;background:#f7f7f8"></div>
<!-- notifications icon -->
<svg class="abs" style="left:26px;top:122px" width="16" height="16" viewBox="0 0 16 16" fill="none" stroke="#222" stroke-width="1.5" stroke-linecap="round" stroke-linejoin="round"><path d="M7.8 2 H4 A2.4 2.4 0 0 0 1.6 4.4 V12.2 A2.4 2.4 0 0 0 4 14.6 H11.8 A2.4 2.4 0 0 0 14.2 12.2 V8.2"/><circle cx="13" cy="3" r="2.3"/></svg>
<div class="t sbt" style="left:51px;top:122px;letter-spacing:0.15px">Notifications</div>
<div class="abs" style="left:291px;top:122px;width:20px;height:16px;border-radius:8px;background:#ec4035"></div>
<div class="t" style="left:291px;top:125px;width:20px;text-align:center;font-size:10px;color:#fff">5</div>
<!-- recent -->
<svg class="abs" style="left:25px;top:160px" width="16" height="16" viewBox="0 0 16 16" fill="none" stroke="#222" stroke-width="1.5" stroke-linecap="round" stroke-linejoin="round"><circle cx="8" cy="8" r="6.8"/><path d="M8 5.2 V8.9 L10.5 9.7"/></svg>
<div class="t sbt" style="left:49px;top:160px;letter-spacing:-0.3px">Recent</div>
<!-- my meetings -->
<svg class="abs" style="left:25px;top:198px" width="16" height="16" viewBox="0 0 16 16" fill="none" stroke="#222" stroke-width="1.5" stroke-linecap="round" stroke-linejoin="round"><rect x="1" y="3" width="9.6" height="10" rx="2"/><path d="M10.8 6.6 L14.6 4.6 V11.4 L10.8 9.4"/></svg>
<div class="t sbt" style="left:49px;top:198px;letter-spacing:0px">My meetings</div>
<!-- my docs -->
<svg class="abs" style="left:26px;top:236px" width="16" height="16" viewBox="0 0 16 16" fill="none" stroke="#222" stroke-width="1.5" stroke-linecap="round" stroke-linejoin="round"><circle cx="8" cy="4.4" r="2.6"/><path d="M2.4 14.6 V13 A3.2 3.2 0 0 1 5.6 9.8 H10.4 A3.2 3.2 0 0 1 13.6 13 V14.6"/></svg>
<div class="t sbt" style="left:51px;top:236px;letter-spacing:0px">My docs</div>
<!-- shared with me -->
<svg class="abs" style="left:25px;top:274px" width="18" height="16" viewBox="0 0 18 16" fill="none" stroke="#222" stroke-width="1.5" stroke-linecap="round" stroke-linejoin="round"><circle cx="6.6" cy="4.4" r="2.6"/><path d="M1.4 14.6 V13 A3.2 3.2 0 0 1 4.6 9.8 H8.6 A3.2 3.2 0 0 1 11.8 13 V14.6"/><path d="M11.4 1.9 A2.6 2.6 0 0 1 11.4 6.9"/><path d="M13.6 9.9 A3.2 3.2 0 0 1 16.4 13 V14.6"/></svg>
<div class="t sbt" style="left:51px;top:274px;letter-spacing:-0.08px">Shared with me</div>
<!-- starred -->
<svg class="abs" style="left:25px;top:311px" width="18" height="18" viewBox="0 0 18 18" fill="none" stroke="#222" stroke-width="1.5" stroke-linecap="round" stroke-linejoin="round"><path d="M9.00 1.90 L11.41 6.28 L16.32 7.22 L12.90 10.87 L13.53 15.83 L9.00 13.70 L4.47 15.83 L5.10 10.87 L1.68 7.22 L6.59 6.28 Z" stroke-width="1.7"/></svg>
<div class="t sbt" style="left:51px;top:312px;letter-spacing:-0.13px">Starred</div>
<!-- trash -->
<svg class="abs" style="left:26px;top:819px" width="16" height="18" viewBox="0 0 16 18" fill="none" stroke="#444" stroke-width="1.3" stroke-linecap="round" stroke-linejoin="round"><path d="M5.4 1 H10.6"/><path d="M1 3.8 H15"/><path d="M2.6 3.8 L3.3 14.6 A2 2 0 0 0 5.3 16.5 H10.7 A2 2 0 0 0 12.7 14.6 L13.4 3.8"/><path d="M6.4 7.4 V12.8 M9.6 7.4 V12.8"/></svg>
<div class="t sbt" style="left:51px;top:820px;color:#4a4a4a;letter-spacing:-0.4px">Trash</div>
<!-- SIDEBAR -->
</div>
</body>
</html>
